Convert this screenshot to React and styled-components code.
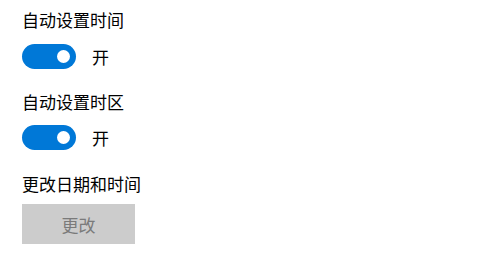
import React from "react";
import styled, { createGlobalStyle } from "styled-components";

const GlobalStyle = createGlobalStyle`
  html, body {
    margin: 0;
    padding: 0;
    background: #ffffff;
  }
  body {
    font-family: "Noto Sans CJK SC", "Noto Sans", sans-serif;
    color: #000000;
  }
`;

const Page = styled.div`
  display: flex;
  flex-direction: column;
  align-items: flex-start;
  padding: 8px 0 0 22px;
  width: 485px;
  height: 280px;
  box-sizing: border-box;
`;

const Section = styled.div`
  display: flex;
  flex-direction: column;
  align-items: flex-start;
  margin-bottom: ${(p) => p.$after}px;
`;

const Title = styled.div`
  font-size: 17px;
  line-height: 24px;
  margin-bottom: ${(p) => p.$gap}px;
`;

const ToggleRow = styled.div`
  display: flex;
  align-items: center;
  gap: 16px;
`;

const Track = styled.div`
  width: 54px;
  height: 25px;
  border-radius: 13px;
  background: ${(p) => (p.$on ? "#0078d7" : "#ffffff")};
  border: ${(p) => (p.$on ? "none" : "2px solid #333")};
  box-sizing: border-box;
  display: flex;
  align-items: center;
  justify-content: ${(p) => (p.$on ? "flex-end" : "flex-start")};
  padding: 0 6px;
`;

const Knob = styled.div`
  width: 13px;
  height: 13px;
  border-radius: 50%;
  background: ${(p) => (p.$on ? "#ffffff" : "#333")};
`;

const State = styled.span`
  font-size: 17px;
  line-height: 24px;
`;

const Button = styled.button`
  width: 113px;
  height: 40px;
  border: none;
  background: #cccccc;
  color: #7a7a7a;
  font-family: "Noto Sans CJK SC", "Noto Sans", sans-serif;
  font-size: 17px;
  padding: 0;
  cursor: default;
`;

function Toggle({ on }) {
  return (
    <ToggleRow>
      <Track $on={on}>
        <Knob $on={on} />
      </Track>
      <State>{on ? "开" : "关"}</State>
    </ToggleRow>
  );
}

export default function App() {
  return (
    <>
      <GlobalStyle />
      <Page>
        <Section $after={21}>
          <Title $gap={12}>自动设置时间</Title>
          <Toggle on />
        </Section>
        <Section $after={22}>
          <Title $gap={11}>自动设置时区</Title>
          <Toggle on />
        </Section>
        <Section $after={0}>
          <Title $gap={8}>更改日期和时间</Title>
          <Button disabled>更改</Button>
        </Section>
      </Page>
    </>
  );
}
